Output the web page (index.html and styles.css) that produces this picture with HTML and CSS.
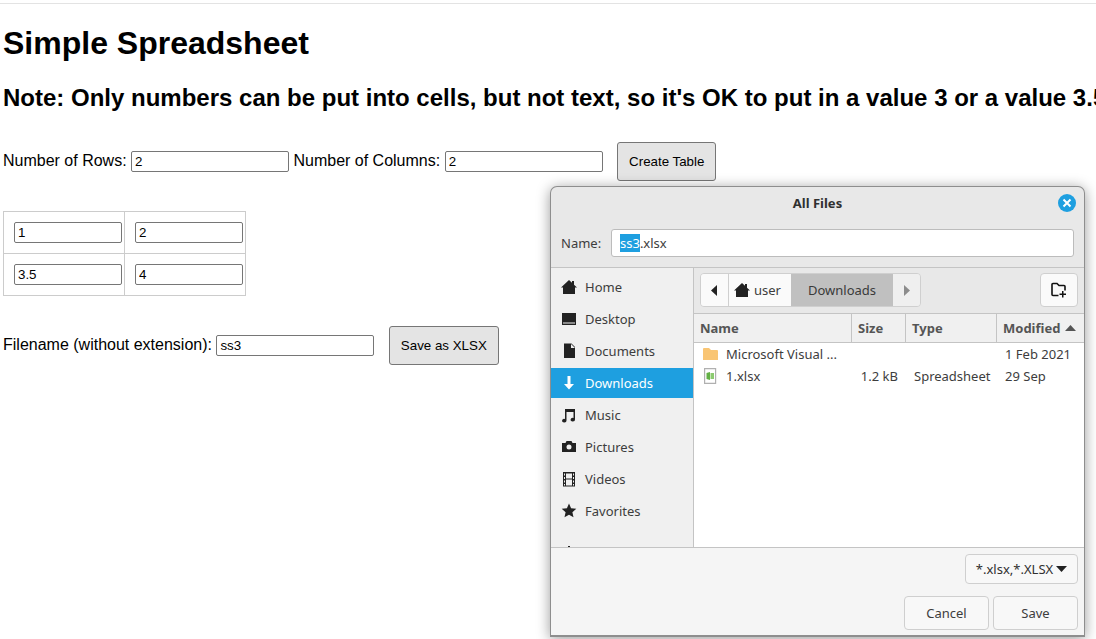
FILE: index.html

```html
<!DOCTYPE html>
<html lang="en">
<head>
  <meta charset="UTF-8" />
  <title>Simple Spreadsheet</title>
  <link rel="stylesheet" href="styles.css">
</head>
<body>
  <div class="topline"></div>
  <main class="page">
    <h1>Simple Spreadsheet</h1>
    <h2>Note: Only numbers can be put into cells, but not text, so it's OK to put in a value 3 or a value 3.5</h2>

    <div class="row size-row">
      <label>Number of Rows:</label>
      <input type="text" class="num" value="2" />
      <label>Number of Columns:</label>
      <input type="text" class="num" value="2" />
      <button type="button" class="btn create">Create Table</button>
    </div>

    <table class="sheet">
      <tr>
        <td><input type="text" class="cell" value="1" /></td>
        <td><input type="text" class="cell" value="2" /></td>
      </tr>
      <tr>
        <td><input type="text" class="cell" value="3.5" /></td>
        <td><input type="text" class="cell" value="4" /></td>
      </tr>
    </table>

    <div class="row save-row">
      <label>Filename (without extension):</label>
      <input type="text" class="num" value="ss3" />
      <button type="button" class="btn save-as">Save as XLSX</button>
    </div>
  </main>

  <!-- native file dialog, floats over the page -->
  <section class="dialog">
    <header class="titlebar">
      <span class="title">All Files</span>
      <span class="close">
        <svg width="10" height="10" viewBox="0 0 10 10"><path d="M1.5 1.5l7 7M8.5 1.5l-7 7" stroke="#fff" stroke-width="2" fill="none"/></svg>
      </span>
    </header>
    <div class="name-row">
      <span>Name:</span>
      <div class="name-entry"><span class="sel">ss3</span>.xlsx</div>
    </div>

    <div class="main">
      <nav class="side">
        <div class="place">
          <svg class="ic" viewBox="0 0 16 16"><path d="M8 1l3 2.800V2h2v3.700L16 8.500h-2V15H2V8.500H0z" fill="#222"/></svg>Home
        </div>
        <div class="place">
          <svg class="ic" viewBox="0 0 16 16"><path fill-rule="evenodd" d="M1 2h14v12H1zM2 11.500v1h12v-1z" fill="#222"/></svg>Desktop
        </div>
        <div class="place">
          <svg class="ic" viewBox="0 0 16 16"><path fill-rule="evenodd" d="M3 .5h7.500L14 4v11H3z" fill="#222"/><path d="M10 1v4h4z" fill="#f0f0f0"/></svg>Documents
        </div>
        <div class="place active">
          <svg class="ic" viewBox="0 0 16 16"><path d="M6.500 1h3v8H13l-5 5.500L3 9h3.500z" fill="#fff"/></svg>Downloads
        </div>
        <div class="place">
          <svg class="ic" viewBox="0 0 16 16"><path d="M4 2h10v10.500a2.200 1.800 0 1 1-1.500-1.600V5H5.500v8.500a2.200 1.800 0 1 1-1.500-1.600z" fill="#222"/></svg>Music
        </div>
        <div class="place">
          <svg class="ic" viewBox="0 0 16 16"><path fill-rule="evenodd" d="M1 4h3.500l1-2h5l1 2H15v9H1zM8 5.500a2.500 2.500 0 1 0 0 5 2.500 2.500 0 0 0 0-5z" fill="#222"/></svg>Pictures
        </div>
        <div class="place">
          <svg class="ic" viewBox="0 0 16 16"><path fill-rule="evenodd" d="M2 1h12v14.500H2zM3 2.500v2h1v-2zM3 6v2h1V6zM3 9.500v2h1v-2zM3 13v1.500h1V13zM12 2.500v2h1v-2zM12 6v2h1V6zM12 9.500v2h1v-2zM12 13v1.500h1V13zM5 2.500v5h6v-5zM5 8.500v6h6v-6z" fill="#222"/></svg>Videos
        </div>
        <div class="place">
          <svg class="ic" viewBox="0 0 16 16"><path d="M8 .5l2.100 4.700 5.200.6-3.900 3.400 1.100 5.100L8 11.700l-4.500 2.600 1.100-5.100L.7 5.800l5.200-.6z" fill="#222"/></svg>Favorites
        </div>
        <div class="place other">
          <svg class="ic" viewBox="0 0 16 16"><path d="M7 2h2v5h5v2H9v5H7V9H2V7h5z" fill="#222"/></svg>Other Locations
        </div>
      </nav>

      <div class="browser">
        <div class="pathbar">
          <div class="crumbs">
            <span class="crumb back">
              <svg width="6" height="11" viewBox="0 0 6 11"><path d="M6 0v11L0 5.500z" fill="#222"/></svg>
            </span>
            <span class="crumb user">
              <svg class="ic" viewBox="0 0 16 16"><path d="M8 1l3 2.800V2h2v3.700L16 8.500h-2V15H2V8.500H0z" fill="#222"/></svg>user
            </span>
            <span class="crumb here">Downloads</span>
            <span class="crumb fwd">
              <svg width="6" height="11" viewBox="0 0 6 11"><path d="M0 0v11l6-5.500z" fill="#8c8c8c"/></svg>
            </span>
          </div>
          <span class="newdir">
            <svg width="16" height="16" viewBox="0 0 16 16"><path d="M7.500 13.500H2a1 1 0 0 1-1-1v-10a1 1 0 0 1 1-1h4l2 2h5a1 1 0 0 1 1 1v4" fill="none" stroke="#111" stroke-width="1.600"/><path d="M11 9h1.500v2.500H15V13h-2.500v2.500H11V13H8.500v-1.500H11z" fill="#111"/></svg>
          </span>
        </div>

        <div class="cols">
          <div class="col c-name">Name</div>
          <div class="col c-size">Size</div>
          <div class="col c-type">Type</div>
          <div class="col c-mod">Modified
            <svg width="11" height="6" viewBox="0 0 11 6"><path d="M0 6L5.500 0 11 6z" fill="#555"/></svg>
          </div>
        </div>

        <div class="files">
          <div class="file">
            <span class="c-name f-name">
              <svg class="fic" viewBox="0 0 16 16"><path d="M1 3a1 1 0 0 1 1-1h5l2 2h6a1 1 0 0 1 1 1v9H1z" fill="#f9c574"/></svg>Microsoft Visual ...
            </span>
            <span class="c-size"></span>
            <span class="c-type"></span>
            <span class="c-mod">1 Feb 2021</span>
          </div>
          <div class="file">
            <span class="c-name f-name">
              <svg class="fic" viewBox="0 0 16 16"><path d="M2.600.6h11v14.800h-11z" fill="#fff" stroke="#b0b0b0" stroke-width="1.200"/><path d="M4.500 5l3.500-1v8l-3.500-1z" fill="#63b045"/><path d="M8.500 5H12v6H8.500z" fill="#8ccb70"/></svg>1.xlsx
            </span>
            <span class="c-size size-val">1.2 kB</span>
            <span class="c-type">Spreadsheet</span>
            <span class="c-mod">29 Sep</span>
          </div>
        </div>
      </div>
    </div>

    <footer class="foot">
      <div class="filter">*.xlsx,*.XLSX
        <svg width="11" height="6" viewBox="0 0 11 6"><path d="M0 0h11L5.500 6z" fill="#222"/></svg>
      </div>
      <div class="actions">
        <span class="gbtn">Cancel</span>
        <span class="gbtn">Save</span>
      </div>
    </footer>
  </section>
</body>
</html>
```

FILE: styles.css

```css
html, body { margin: 0; height: 100%; overflow: hidden; background: #fff; }
body { font-family: "Liberation Sans", Arial, sans-serif; font-size: 16px; color: #000; }

.topline { height: 3px; border-bottom: 1px solid #e3e3e3; }
.page { padding-left: 3px; white-space: nowrap; }

h1 { margin: 21px 0 0; font-size: 32px; line-height: 37px; }
h2 { margin: 22px 0 0; font-size: 24px; line-height: 28px; }

.row { display: flex; align-items: center; }
.row label { margin-right: 4.45px; padding-bottom: 2px; }
.size-row { margin-top: 30px; height: 39px; }
.save-row { margin-top: 30px; height: 39px; }

.num, .cell {
  box-sizing: border-box; height: 21px; padding: 1px 3px; margin: 0;
  border: 1px solid #767676; border-radius: 2px;
  font: 13.333px "Liberation Sans", Arial, sans-serif; color: #000;
}
.num { width: 158px; margin-right: 4.45px; }
.cell { width: 108px; display: block; }

.btn {
  box-sizing: border-box; height: 39px; padding: 0 13px 0 11px;
  background: #e4e4e4; border: 1px solid #767676; border-radius: 3px;
  font: 13.333px "Liberation Sans", Arial, sans-serif; color: #000;
}
.create { margin-left: 10px; width: 99px; }
.save-as { margin-left: 10.5px; width: 110px; padding: 0 13.5px 0 10.5px; }

.sheet { margin-top: 30px; border-collapse: collapse; }
.sheet td { border: 1px solid #ccc; padding: 10px 2px 10px 10px; }

/* file dialog */
.dialog {
  position: absolute; left: 550px; top: 186px; width: 535px; height: 451px;
  box-sizing: border-box; display: flex; flex-direction: column;
  background: #e8e8e8; border: 1px solid #8e8e8e; border-bottom-width: 2px; border-radius: 7px 7px 0 0;
  box-shadow: 0 2px 14px rgba(0,0,0,.4);
  font-family: "Noto Sans", sans-serif; font-size: 13px; color: #3d3d3d;
  overflow: hidden;
}
.titlebar { position: relative; height: 32px; flex: none; display: flex; align-items: center; justify-content: center; }
.title { font-weight: bold; color: #303030; }
.close {
  position: absolute; right: 8px; top: 7px; width: 18px; height: 18px; border-radius: 50%;
  background: #1e9fe0; display: flex; align-items: center; justify-content: center;
}

.name-row { flex: none; height: 48px; display: flex; align-items: flex-start; padding: 10px 10px 0 10px; box-sizing: border-box; }
.name-row > span { line-height: 28px; width: 50px; }
.name-entry {
  box-sizing: border-box; flex: 1; height: 28px; line-height: 26px; padding-left: 8px;
  background: #fff; border: 1px solid #bcbcbc; border-radius: 3px;
}
.sel { background: #1e9fe0; color: #fff; }

.main { flex: 1; min-height: 0; display: flex; border-top: 1px solid #c4c4c4; border-bottom: 1px solid #c4c4c4; }

.side { width: 142px; flex: none; background: #f0f0f0; border-right: 1px solid #c4c4c4; overflow: hidden; padding-top: 4px; }
.place { height: 30px; margin-bottom: 2px; display: flex; align-items: center; padding-left: 10px; color: #3d3d3d; }
.place.active { background: #1e9fe0; color: #fff; }
.place.other { margin-top: 11px; }
.ic { width: 16px; height: 16px; margin-right: 8px; flex: none; }

.browser { flex: 1; min-width: 0; background: #fff; display: flex; flex-direction: column; }

.pathbar {
  flex: none; height: 45px; box-sizing: border-box; padding: 5px 6px;
  display: flex; justify-content: space-between; background: #e8e8e8;
}
.crumbs { display: flex; height: 34px; box-sizing: border-box; border: 1px solid #cfcfcf; border-radius: 4px; overflow: hidden; }
.crumb { display: flex; align-items: center; justify-content: center; box-sizing: border-box; height: 100%; }
.back { width: 28px; padding-right: 2px; background: #fafafa; border-right: 1px solid #cfcfcf; }
.user { width: 62px; padding-left: 5px; justify-content: flex-start; background: #fafafa; }
.user .ic { margin-right: 4px; }
.here { width: 102px; background: #c0c0c0; color: #3a3a3a; }
.fwd { width: 27px; background: #efefef; }
.newdir {
  width: 38px; height: 34px; box-sizing: border-box; background: #fafafa;
  border: 1px solid #cfcfcf; border-radius: 4px; display: flex; align-items: center; justify-content: center;
}

.cols { flex: none; display: flex; height: 30px; box-sizing: border-box; background: #f0f0f0; border-top: 1px solid #c4c4c4; border-bottom: 1px solid #c4c4c4; }
.col { display: flex; align-items: center; font-weight: bold; color: #555; padding-left: 6px; box-sizing: border-box; border-right: 1px solid #c4c4c4; }
.col:last-child { border-right: 0; }
.col svg { margin-left: 5px; }
.c-name { width: 158px; }
.c-size { width: 54px; }
.c-type { width: 91px; }
.c-mod { width: 87px; }

.files { flex: 1; }
.file { display: flex; height: 22px; align-items: center; white-space: nowrap; }
.file > span { box-sizing: border-box; display: block; }
.file > .f-name { display: flex; align-items: center; padding-left: 8px; }
.fic { width: 16px; height: 16px; margin-right: 8px; flex: none; }
.size-val { text-align: right; padding-right: 8px; }
.file .c-type { padding-left: 8px; }
.file .c-mod { padding-left: 8px; }

.foot { flex: none; height: 87px; box-sizing: border-box; background: #f5f5f5; padding: 6px 6px 0; display: flex; flex-direction: column; align-items: flex-end; }
.filter {
  width: 113px; height: 30px; box-sizing: border-box; display: flex; align-items: center; justify-content: center; gap: 3px;
  background: #f8f8f8; border: 1px solid #cfcfcf; border-radius: 4px; color: #303030;
}
.actions { display: flex; gap: 4px; margin-top: 12px; }
.gbtn {
  width: 85px; height: 34px; box-sizing: border-box; display: flex; align-items: center; justify-content: center;
  background: #f8f8f8; border: 1px solid #cfcfcf; border-radius: 4px; color: #3d3d3d;
}
```
